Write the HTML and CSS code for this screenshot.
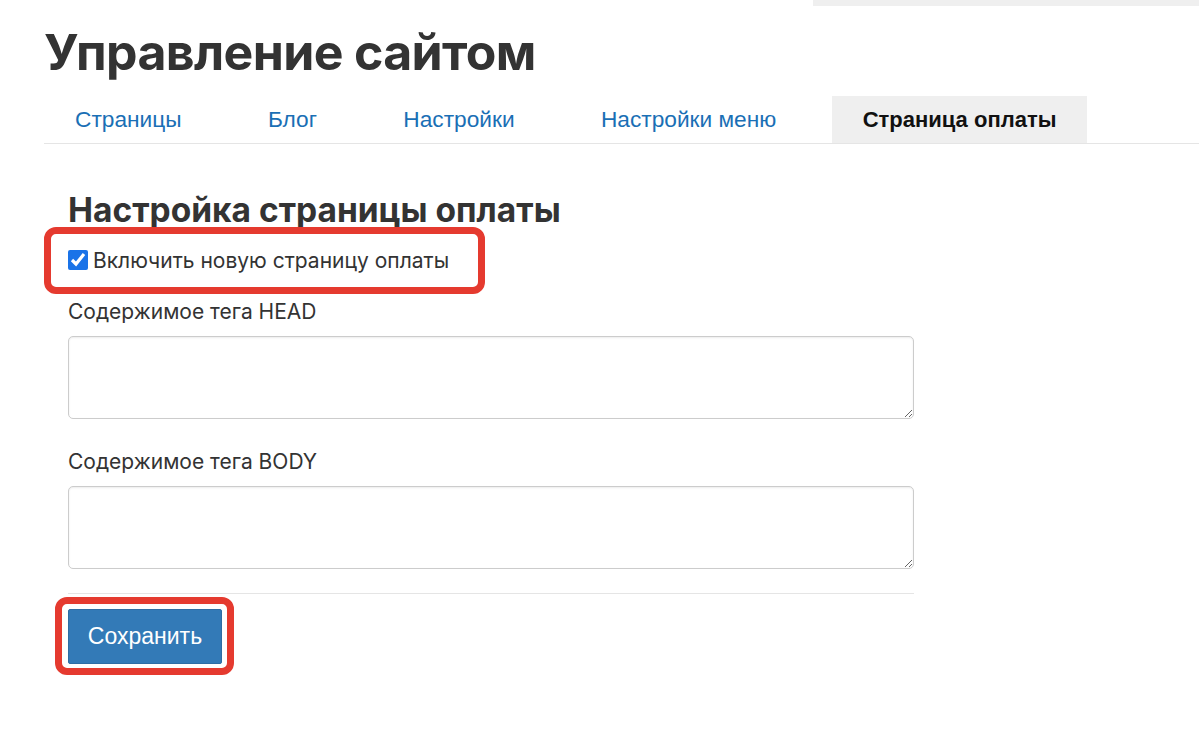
FILE: index.html
```html
<!DOCTYPE html>
<html lang="ru">
<head>
<meta charset="utf-8">
<title>Управление сайтом</title>
<link rel="stylesheet" href="styles.css">
</head>
<body>
<div class="topbar"></div>
<div class="page">
  <h1 class="title">Управление сайтом</h1>
  <nav class="tabs">
    <a class="tab" href="#">Страницы</a>
    <a class="tab" href="#">Блог</a>
    <a class="tab" href="#">Настройки</a>
    <a class="tab" href="#">Настройки меню</a>
    <a class="tab active" href="#">Страница оплаты</a>
  </nav>
  <form class="content">
    <h2 class="section-title">Настройка страницы оплаты</h2>
    <div class="check-row">
      <label class="check"><input type="checkbox" checked><span>Включить новую страницу оплаты</span></label>
      <div class="mark mark-check"></div>
    </div>
    <label class="field-label">Содержимое тега HEAD</label>
    <textarea class="field"></textarea>
    <label class="field-label second">Содержимое тега BODY</label>
    <textarea class="field"></textarea>
    <hr class="divider">
    <div class="btn-wrap">
      <button type="button" class="btn">Сохранить</button>
      <div class="mark mark-btn"></div>
    </div>
  </form>
</div>
</body>
</html>
```
FILE: styles.css
```css
* { box-sizing: border-box; }
html, body { margin: 0; padding: 0; background: #fff; }
body {
  font-family: "Inter", "Liberation Sans", sans-serif;
  color: #333;
  min-height: 755px;
}

.topbar {
  margin-left: 813px;
  height: 6px;
  background: #efefef;
}

.page { padding-left: 44px; padding-bottom: 60px; }

.title {
  margin: 16px 0 0 0;
  font-family: "Inter", sans-serif;
  font-weight: 700;
  font-size: 50px;
  line-height: 60px;
  letter-spacing: -0.65px;
  color: #333;
}

.tabs {
  display: flex;
  gap: 24.4px;
  margin-top: 14px;
  border-bottom: 1px solid #e5e5e5;
}
.tab {
  display: block;
  height: 47px;
  line-height: 47px;
  padding: 0 31px;
  font-family: "Liberation Sans", Arial, sans-serif;
  font-size: 22.7px;
  color: #1a6fb5;
  text-decoration: none;
}
.tab.active {
  background: #efefef;
  color: #111;
  font-weight: 700;
  font-size: 22px;
}

.content {
  padding-left: 24px;
  width: 870px;
}

.section-title {
  margin: 46px 0 0 0;
  font-family: "Inter", sans-serif;
  font-weight: 700;
  font-size: 33.5px;
  line-height: 40px;
  color: #333;
}

.check-row { position: relative; margin-top: 17px; }
.check {
  display: flex;
  align-items: center;
  gap: 5px;
  height: 26px;
  font-size: 21px;
  color: #333;
}
.check input {
  width: 20px;
  height: 20px;
  margin: 0;
  accent-color: #1a73e8;
}

.mark {
  position: absolute;
  border: 7px solid #e53a2f;
  border-radius: 12px;
  pointer-events: none;
}
.mark-check { left: -24px; top: -20px; width: 441px; height: 67px; }

.field-label {
  display: block;
  margin-top: 26px;
  font-size: 21px;
  line-height: 26px;
  color: #333;
}
.field-label.second { margin-top: 30px; }

.field {
  display: block;
  width: 846px;
  height: 83px;
  margin-top: 11px;
  border: 1px solid #ccc;
  border-radius: 5px;
  box-shadow: inset 0 1px 2px rgba(0,0,0,0.08);
  resize: vertical;
  font-family: inherit;
}

.divider {
  width: 846px;
  margin: 24px 0 0 0;
  border: 0;
  border-top: 1px solid #e5e5e5;
}

.btn-wrap { position: relative; margin-top: 15px; width: 154px; }
.btn {
  display: block;
  width: 154px;
  height: 55px;
  background: #337ab7;
  border: 1px solid #2e6da4;
  border-radius: 2px;
  color: #fff;
  font-family: "Liberation Sans", Arial, sans-serif;
  font-size: 23px;
}
.mark-btn { left: -13px; top: -12px; width: 179px; height: 78px; }
```
